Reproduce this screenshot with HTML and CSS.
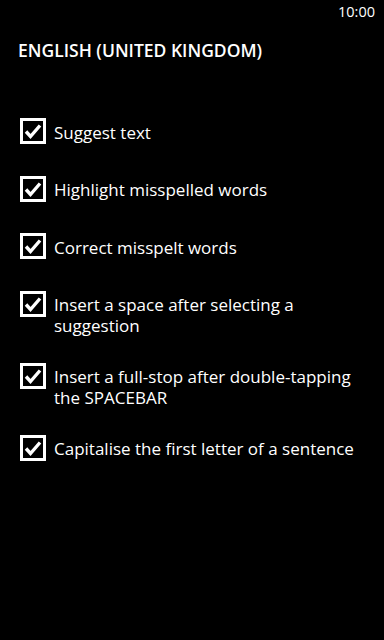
FILE: index.html
```html
<!DOCTYPE html>
<html>
<head>
<meta charset="utf-8">
<link rel="stylesheet" href="styles.css">
</head>
<body>
<div class="status"><span class="time">10:00</span></div>
<h1 class="title">ENGLISH (UNITED KINGDOM)</h1>
<ul class="options">
  <li class="option">
    <svg class="box" viewBox="0 0 26 26" width="26" height="26"><rect x="1.5" y="1.5" width="23" height="23" fill="none" stroke="#fff" stroke-width="3"/><polyline points="6,13.5 10.5,18.5 20,7.5" fill="none" stroke="#fff" stroke-width="3.4"/></svg>
    <span class="label">Suggest text</span>
  </li>
  <li class="option">
    <svg class="box" viewBox="0 0 26 26" width="26" height="26"><rect x="1.5" y="1.5" width="23" height="23" fill="none" stroke="#fff" stroke-width="3"/><polyline points="6,13.5 10.5,18.5 20,7.5" fill="none" stroke="#fff" stroke-width="3.4"/></svg>
    <span class="label">Highlight misspelled words</span>
  </li>
  <li class="option">
    <svg class="box" viewBox="0 0 26 26" width="26" height="26"><rect x="1.5" y="1.5" width="23" height="23" fill="none" stroke="#fff" stroke-width="3"/><polyline points="6,13.5 10.5,18.5 20,7.5" fill="none" stroke="#fff" stroke-width="3.4"/></svg>
    <span class="label">Correct misspelt words</span>
  </li>
  <li class="option">
    <svg class="box" viewBox="0 0 26 26" width="26" height="26"><rect x="1.5" y="1.5" width="23" height="23" fill="none" stroke="#fff" stroke-width="3"/><polyline points="6,13.5 10.5,18.5 20,7.5" fill="none" stroke="#fff" stroke-width="3.4"/></svg>
    <span class="label">Insert a space after selecting a<br>suggestion</span>
  </li>
  <li class="option">
    <svg class="box" viewBox="0 0 26 26" width="26" height="26"><rect x="1.5" y="1.5" width="23" height="23" fill="none" stroke="#fff" stroke-width="3"/><polyline points="6,13.5 10.5,18.5 20,7.5" fill="none" stroke="#fff" stroke-width="3.4"/></svg>
    <span class="label">Insert a full-stop after double-tapping<br>the SPACEBAR</span>
  </li>
  <li class="option">
    <svg class="box" viewBox="0 0 26 26" width="26" height="26"><rect x="1.5" y="1.5" width="23" height="23" fill="none" stroke="#fff" stroke-width="3"/><polyline points="6,13.5 10.5,18.5 20,7.5" fill="none" stroke="#fff" stroke-width="3.4"/></svg>
    <span class="label">Capitalise the first letter of a sentence</span>
  </li>
</ul>
</body>
</html>
```

FILE: styles.css
```css
html, body {
  margin: 0;
  padding: 0;
  background: #000;
  color: #fff;
  font-family: "Open Sans", "Noto Sans", sans-serif;
}
body {
  width: 384px;
  height: 640px;
  overflow: hidden;
}
.status {
  display: flex;
  justify-content: flex-end;
  height: 24px;
  padding-right: 9px;
  align-items: center;
}
.time {
  font-size: 14.5px;
  line-height: 24px;
}
.title {
  margin: 15px 0 0 18px;
  font-size: 17.5px;
  font-weight: 600;
  line-height: 23px;
  letter-spacing: 0;
}
.options {
  list-style: none;
  margin: 0;
  padding: 0 0 0 20px;
  margin-top: 56px;
  display: flex;
  flex-direction: column;
  gap: 26.5px;
}
.option {
  display: flex;
  align-items: flex-start;
  min-height: 31px;
}
.box {
  flex: none;
  display: block;
}
.label {
  margin-left: 8px;
  margin-top: 3.5px;
  font-size: 17px;
  line-height: 21px;
}
```
